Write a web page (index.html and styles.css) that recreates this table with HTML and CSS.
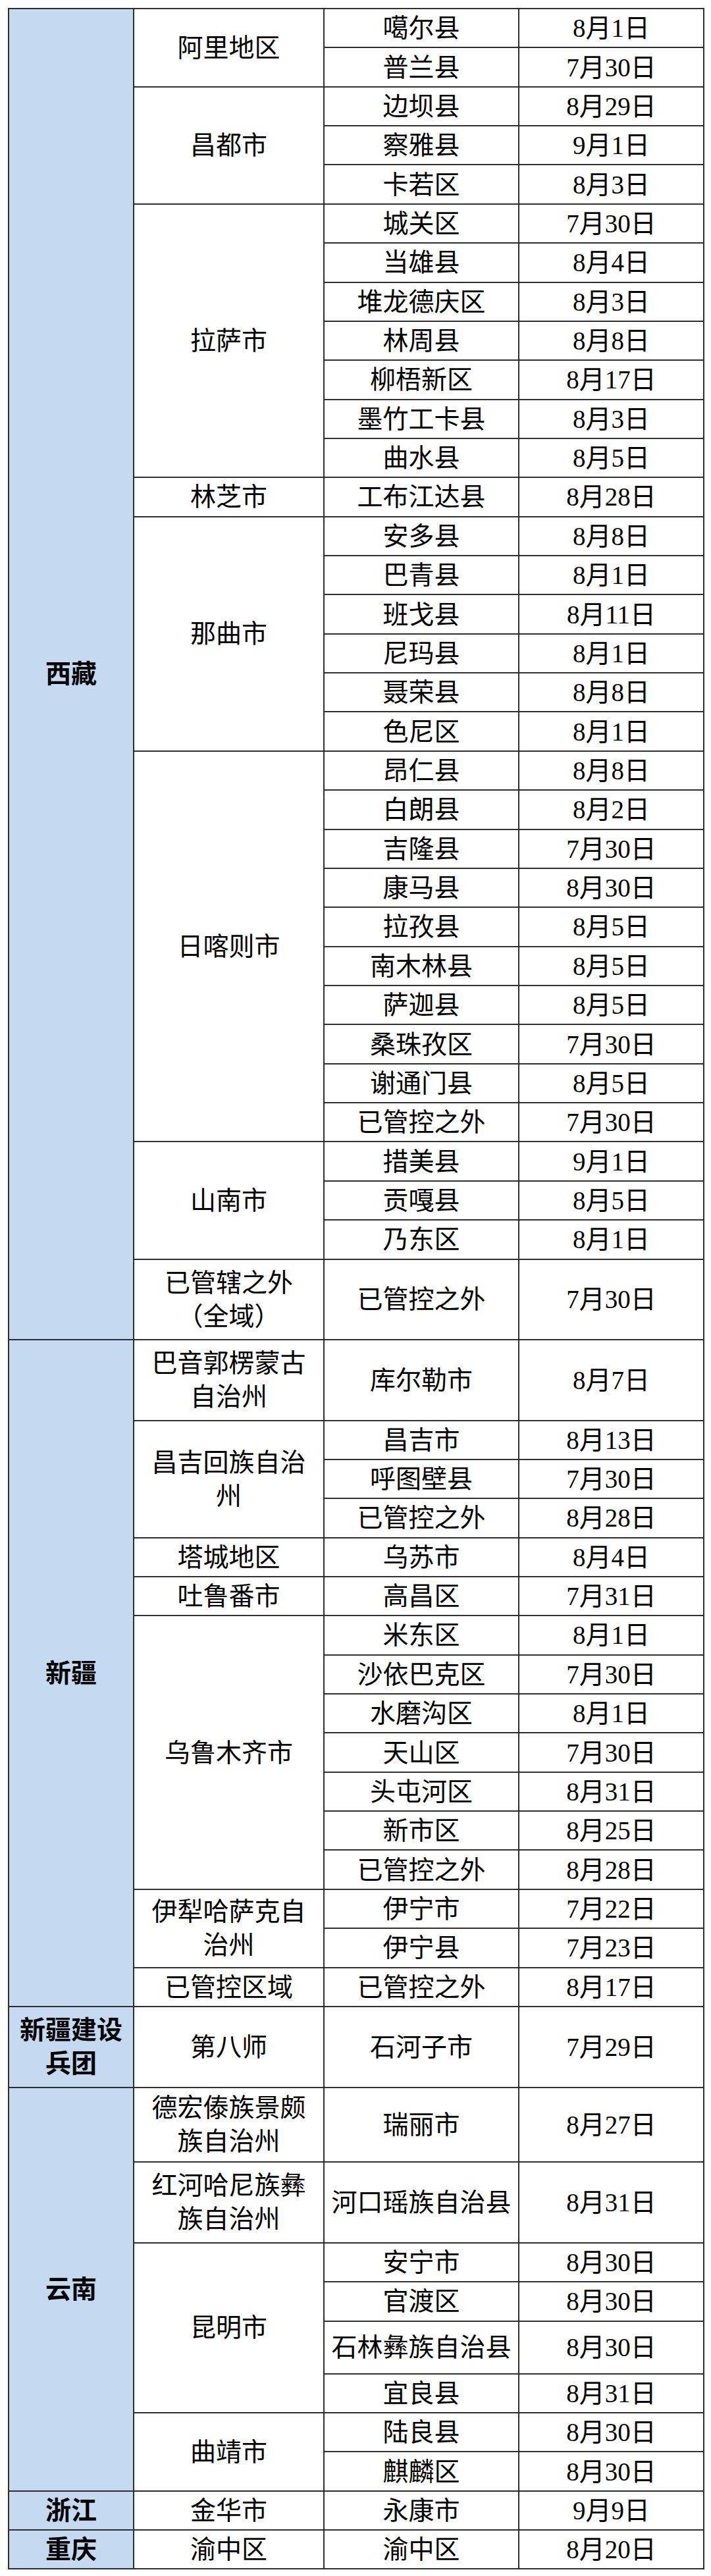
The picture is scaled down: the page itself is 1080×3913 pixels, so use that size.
FILE: index.html
```html
<!DOCTYPE html>
<html lang="zh-CN">
<head>
<meta charset="utf-8">
<title>管控区域解除日期</title>
<link rel="stylesheet" href="styles.css">
</head>
<body>
<table class="sheet">
  <colgroup>
    <col class="c-prov"><col class="c-city"><col class="c-county"><col class="c-date">
  </colgroup>
  <tbody>
    <tr><td class="prov" rowspan="33">西藏</td><td rowspan="2">阿里地区</td><td>噶尔县</td><td>8月1日</td></tr>
    <tr><td>普兰县</td><td>7月30日</td></tr>
    <tr><td rowspan="3">昌都市</td><td>边坝县</td><td>8月29日</td></tr>
    <tr><td>察雅县</td><td>9月1日</td></tr>
    <tr><td>卡若区</td><td>8月3日</td></tr>
    <tr><td rowspan="7">拉萨市</td><td>城关区</td><td>7月30日</td></tr>
    <tr><td>当雄县</td><td>8月4日</td></tr>
    <tr><td>堆龙德庆区</td><td>8月3日</td></tr>
    <tr><td>林周县</td><td>8月8日</td></tr>
    <tr><td>柳梧新区</td><td>8月17日</td></tr>
    <tr><td>墨竹工卡县</td><td>8月3日</td></tr>
    <tr><td>曲水县</td><td>8月5日</td></tr>
    <tr><td>林芝市</td><td>工布江达县</td><td>8月28日</td></tr>
    <tr><td rowspan="6">那曲市</td><td>安多县</td><td>8月8日</td></tr>
    <tr><td>巴青县</td><td>8月1日</td></tr>
    <tr><td>班戈县</td><td>8月11日</td></tr>
    <tr><td>尼玛县</td><td>8月1日</td></tr>
    <tr><td>聂荣县</td><td>8月8日</td></tr>
    <tr><td>色尼区</td><td>8月1日</td></tr>
    <tr><td rowspan="10">日喀则市</td><td>昂仁县</td><td>8月8日</td></tr>
    <tr><td>白朗县</td><td>8月2日</td></tr>
    <tr><td>吉隆县</td><td>7月30日</td></tr>
    <tr><td>康马县</td><td>8月30日</td></tr>
    <tr><td>拉孜县</td><td>8月5日</td></tr>
    <tr><td>南木林县</td><td>8月5日</td></tr>
    <tr><td>萨迦县</td><td>8月5日</td></tr>
    <tr><td>桑珠孜区</td><td>7月30日</td></tr>
    <tr><td>谢通门县</td><td>8月5日</td></tr>
    <tr><td>已管控之外</td><td>7月30日</td></tr>
    <tr><td rowspan="3">山南市</td><td>措美县</td><td>9月1日</td></tr>
    <tr><td>贡嘎县</td><td>8月5日</td></tr>
    <tr><td>乃东区</td><td>8月1日</td></tr>
    <tr class="tall"><td class="name">已管辖之外（全域）</td><td>已管控之外</td><td>7月30日</td></tr>

    <tr class="tall2"><td class="prov" rowspan="16">新疆</td><td class="name">巴音郭楞蒙古自治州</td><td>库尔勒市</td><td>8月7日</td></tr>
    <tr><td class="name" rowspan="3">昌吉回族自治州</td><td>昌吉市</td><td>8月13日</td></tr>
    <tr><td>呼图壁县</td><td>7月30日</td></tr>
    <tr><td>已管控之外</td><td>8月28日</td></tr>
    <tr><td>塔城地区</td><td>乌苏市</td><td>8月4日</td></tr>
    <tr><td>吐鲁番市</td><td>高昌区</td><td>7月31日</td></tr>
    <tr><td rowspan="7">乌鲁木齐市</td><td>米东区</td><td>8月1日</td></tr>
    <tr><td>沙依巴克区</td><td>7月30日</td></tr>
    <tr><td>水磨沟区</td><td>8月1日</td></tr>
    <tr><td>天山区</td><td>7月30日</td></tr>
    <tr><td>头屯河区</td><td>8月31日</td></tr>
    <tr><td>新市区</td><td>8月25日</td></tr>
    <tr><td>已管控之外</td><td>8月28日</td></tr>
    <tr><td class="name" rowspan="2">伊犁哈萨克自治州</td><td>伊宁市</td><td>7月22日</td></tr>
    <tr><td>伊宁县</td><td>7月23日</td></tr>
    <tr><td>已管控区域</td><td>已管控之外</td><td>8月17日</td></tr>

    <tr class="tall2"><td class="prov">新疆建设兵团</td><td>第八师</td><td>石河子市</td><td>7月29日</td></tr>

    <tr class="tall3"><td class="prov" rowspan="8">云南</td><td class="name">德宏傣族景颇族自治州</td><td>瑞丽市</td><td>8月27日</td></tr>
    <tr class="tall2"><td class="name">红河哈尼族彝族自治州</td><td>河口瑶族自治县</td><td>8月31日</td></tr>
    <tr><td rowspan="4">昆明市</td><td>安宁市</td><td>8月30日</td></tr>
    <tr><td>官渡区</td><td>8月30日</td></tr>
    <tr class="mid"><td>石林彝族自治县</td><td>8月30日</td></tr>
    <tr><td>宜良县</td><td>8月31日</td></tr>
    <tr><td rowspan="2">曲靖市</td><td>陆良县</td><td>8月30日</td></tr>
    <tr><td>麒麟区</td><td>8月30日</td></tr>

    <tr><td class="prov">浙江</td><td>金华市</td><td>永康市</td><td>9月9日</td></tr>
    <tr><td class="prov">重庆</td><td>渝中区</td><td>渝中区</td><td>8月20日</td></tr>
  </tbody>
</table>
</body>
</html>
```

FILE: styles.css
```css
html, body {
  margin: 0;
  padding: 0;
  background: #ffffff;
}

body {
  padding: 12px;
}

.sheet {
  border-collapse: collapse;
  table-layout: fixed;
  width: 1056px;
  font-family: "Liberation Serif", "Noto Sans CJK SC", serif;
  font-size: 39px;
  line-height: 51px;
  color: #000000;
}

.c-prov { width: 190px; }
.c-city { width: 289px; }
.c-county { width: 296px; }
.c-date { width: 281px; }

.sheet td {
  border: 2px solid #2e2e2e;
  text-align: center;
  vertical-align: middle;
  padding: 0 2px;
  height: 59.36px;
  box-sizing: border-box;
  white-space: nowrap;
}

.sheet td.name {
  white-space: normal;
  padding: 0 14px;
}

.sheet td.prov {
  background: #c5d9f1;
  font-weight: bold;
  white-space: normal;
  padding: 0 8px;
}

.sheet tr.tall td { height: 122px; }
.sheet tr.tall2 td { height: 123px; }
.sheet tr.tall3 td { height: 113px; }
.sheet tr.mid td { height: 80px; }
```
